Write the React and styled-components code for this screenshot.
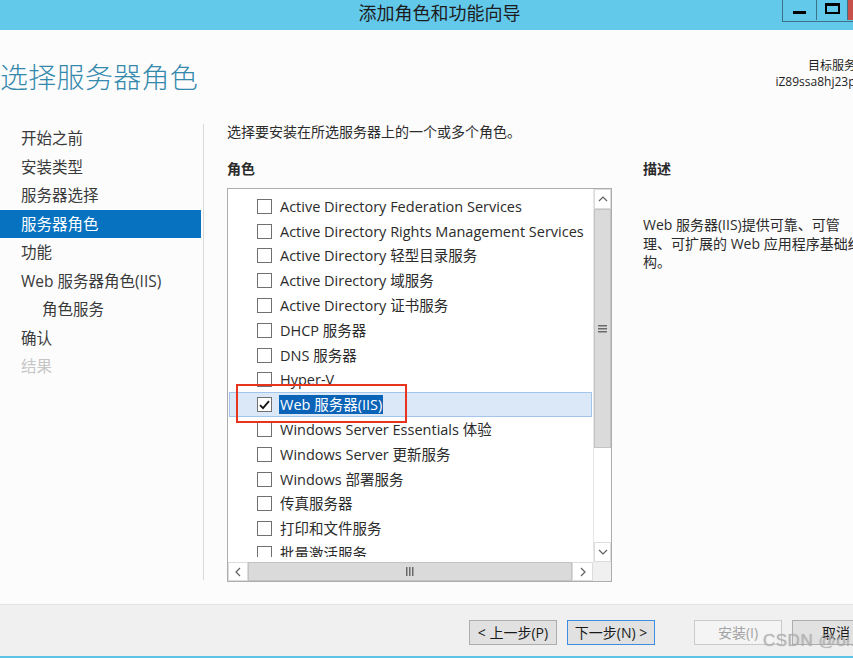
import React from "react";
import styled, { createGlobalStyle } from "styled-components";

const UI_FONT = `"Open Sans", "Noto Sans CJK SC", sans-serif`;

const GlobalStyle = createGlobalStyle`
  html, body {
    margin: 0;
    padding: 0;
    background: #fcfcfc;
  }
  body {
    font-family: ${UI_FONT};
  }
`;

const Window = styled.div`
  position: relative;
  width: 853px;
  height: 658px;
  overflow: hidden;
  display: flex;
  flex-direction: column;
  background: #fcfcfc;
  color: #2b2b2b;
  font-family: ${UI_FONT};
`;

/* ---------- title bar ---------- */
const TitleBar = styled.div`
  flex-shrink: 0;
  height: 30px;
  box-sizing: border-box;
  padding-left: 26px;
  display: grid;
  grid-template-columns: 1fr auto 1fr;
  align-items: start;
  background: #63c9ea;
`;

const TitleText = styled.div`
  grid-column: 2;
  font-size: 18px;
  line-height: 27px;
  color: #1c1c1c;
  white-space: nowrap;
`;

const Controls = styled.div`
  grid-column: 3;
  justify-self: end;
  margin-right: -41px;
  display: flex;
  height: 21px;
  border-left: 1px solid #3c7285;
  border-bottom: 1px solid #3c7285;
`;

const CtrlButton = styled.div`
  width: ${(p) => p.$w}px;
  height: 20px;
  box-sizing: border-box;
  border-right: 1px solid #3c7285;
  background: ${(p) => (p.$close ? "#c8504b" : "transparent")};
  display: flex;
  align-items: ${(p) => (p.$min ? "flex-end" : "flex-start")};
  justify-content: center;
`;

const MinGlyph = styled.span`
  width: 13px;
  height: 3px;
  margin-bottom: 6px;
  background: #000;
`;

const MaxGlyph = styled.span`
  width: 15px;
  height: 11px;
  margin-top: 3px;
  box-sizing: border-box;
  border: 2px solid #000;
  border-top-width: 3px;
`;

/* ---------- page header ---------- */
const Header = styled.div`
  flex-shrink: 0;
  height: 94px;
  box-sizing: border-box;
  padding-top: 28px;
  display: flex;
  justify-content: space-between;
  align-items: flex-start;
`;

const PageTitle = styled.h1`
  margin: 0;
  font-family: "Noto Sans CJK SC", sans-serif;
  font-weight: 300;
  font-size: 28px;
  line-height: 36px;
  color: #3489ad;
  letter-spacing: 0.3px;
`;

const TargetInfo = styled.div`
  margin-right: -15px;
  text-align: right;
  font-size: 12px;
  line-height: 16px;
  color: #1e1e1e;
  white-space: nowrap;
`;

/* ---------- body ---------- */
const Body = styled.div`
  flex-shrink: 0;
  height: 480px;
  display: flex;
`;

const Nav = styled.nav`
  flex-shrink: 0;
  width: 204px;
  height: 456px;
  box-sizing: border-box;
  padding-right: 2px;
  border-right: 1px solid #dadada;
`;

const NavItem = styled.div`
  height: 28.5px;
  line-height: 28.5px;
  padding-left: ${(p) => (p.$sub ? 42 : 21)}px;
  font-size: 15.5px;
  white-space: nowrap;
  background: ${(p) => (p.$active ? "#0672c0" : "transparent")};
  color: ${(p) => (p.$active ? "#ffffff" : p.$muted ? "#c6c6c6" : "#3a3a3a")};
`;

const Main = styled.main`
  flex: 1;
  min-width: 0;
  padding-left: 23px;
  display: flex;
  flex-direction: column;
`;

const Intro = styled.p`
  margin: 0;
  font-size: 14px;
  line-height: 16px;
  color: #2b2b2b;
  white-space: nowrap;
`;

const Columns = styled.div`
  margin-top: 21px;
  display: flex;
`;

const RolesColumn = styled.div`
  flex-shrink: 0;
  width: 385px;
`;

const SectionLabel = styled.div`
  font-size: 14px;
  line-height: 16px;
  font-weight: 600;
  color: #2b2b2b;
`;

/* ---------- role list ---------- */
const ListBox = styled.div`
  position: relative;
  margin-top: 11px;
  width: 385px;
  height: 394px;
  box-sizing: border-box;
  border: 1px solid #adadad;
  background: #fff;
  display: grid;
  grid-template-columns: 1fr 18px;
  grid-template-rows: 1fr 19px;
`;

const ListViewport = styled.div`
  padding-top: 5px;
`;

const ListClip = styled.div`
  height: 363px;
  overflow: hidden;
`;

const Row = styled.div`
  height: 24.8px;
  margin: 0 1px;
  box-sizing: border-box;
  padding-left: 27px;
  display: flex;
  align-items: center;
  gap: 8px;
  font-size: 14.5px;
  white-space: nowrap;
  color: #2b2b2b;
  background: ${(p) => (p.$selected ? "#dbe8f8" : "transparent")};
  border: 1px solid ${(p) => (p.$selected ? "#a3c5ec" : "transparent")};
`;

const Check = styled.span`
  flex-shrink: 0;
  width: 15px;
  height: 15px;
  box-sizing: border-box;
  border: 1px solid #707070;
  background: #fff;
  display: flex;
  align-items: center;
  justify-content: center;
`;

const Label = styled.span`
  line-height: 19px;
  padding: 0 1px;
  margin-left: -1px;
  background: ${(p) => (p.$highlight ? "#0b63b8" : "transparent")};
  color: ${(p) => (p.$highlight ? "#ffffff" : "inherit")};
`;

const VScroll = styled.div`
  grid-row: 1;
  grid-column: 2;
  display: flex;
  flex-direction: column;
  background: #fff;
  border-left: 1px solid #e6e6e6;
`;

const HScroll = styled.div`
  grid-row: 2;
  grid-column: 1;
  display: flex;
  background: #fff;
`;

const Corner = styled.div`
  grid-row: 2;
  grid-column: 2;
  background: #f0f0f0;
`;

const ArrowButton = styled.div`
  flex-shrink: 0;
  width: ${(p) => p.$w || 17}px;
  height: ${(p) => p.$h || 19}px;
  box-sizing: border-box;
  border: 1px solid #dcdcdc;
  background: #fff;
  display: flex;
  align-items: center;
  justify-content: center;
`;

const Thumb = styled.div`
  box-sizing: border-box;
  background: #dadada;
  border: 1px solid #c3c3c3;
  display: flex;
  align-items: center;
  justify-content: center;
  flex: ${(p) => (p.$grow ? 1 : "none")};
  height: ${(p) => (p.$h ? `${p.$h}px` : "auto")};
`;

const Track = styled.div`
  flex: 1;
`;

const Annotation = styled.div`
  position: absolute;
  left: 8px;
  top: 195px;
  width: 171px;
  height: 39px;
  box-sizing: border-box;
  border: 2px solid #e8331f;
  pointer-events: none;
`;

/* ---------- description ---------- */
const DescColumn = styled.div`
  margin-left: 31px;
  flex-shrink: 0;
`;

const DescText = styled.div`
  margin-top: 39px;
  font-size: 14px;
  line-height: 18.5px;
  color: #2b2b2b;
  white-space: nowrap;
`;

const DescLine = styled.div``;

/* ---------- footer ---------- */
const Footer = styled.footer`
  flex-shrink: 0;
  height: 52px;
  box-sizing: border-box;
  border-top: 1px solid #e4e4e4;
  background: #f0f0f0;
  padding: 15px 0 0 469px;
  display: flex;
  align-items: flex-start;
`;

const WizardButton = styled.div`
  flex-shrink: 0;
  width: 88px;
  height: 25px;
  box-sizing: border-box;
  margin-left: ${(p) => p.$gap || 0}px;
  border: 1px solid ${(p) => (p.$focus ? "#3d8ee2" : p.$disabled ? "#cacaca" : "#adadad")};
  background: ${(p) => (p.$disabled ? "#f4f4f4" : "#e1e1e1")};
  color: ${(p) => (p.$disabled ? "#a3a3a3" : "#1a1a1a")};
  font-size: 14px;
  line-height: 23px;
  text-align: center;
  white-space: nowrap;
`;

const BottomEdge = styled.div`
  flex-shrink: 0;
  height: 2px;
  background: #5cc3e6;
`;

const Watermark = styled.div`
  position: absolute;
  left: 763px;
  top: 631px;
  font-family: "Liberation Sans", sans-serif;
  font-size: 17px;
  letter-spacing: 0.5px;
  color: rgba(185, 185, 185, 0.75);
  text-shadow: 0 0 1px rgba(120, 120, 120, 0.6);
  white-space: nowrap;
  pointer-events: none;
`;

/* ---------- small drawings ---------- */
const Chevron = ({ dir }) => {
  const paths = {
    up: "M1 5 L5 1 L9 5",
    down: "M1 1 L5 5 L9 1",
    left: "M5 1 L1 5 L5 9",
    right: "M1 1 L5 5 L1 9",
  };
  const vertical = dir === "up" || dir === "down";
  return (
    <svg
      width={vertical ? 10 : 6}
      height={vertical ? 6 : 10}
      viewBox={vertical ? "0 0 10 6" : "0 0 6 10"}
    >
      <path d={paths[dir]} fill="none" stroke="#606060" strokeWidth="1.2" />
    </svg>
  );
};

const Grip = ({ vertical }) =>
  vertical ? (
    <svg width="9" height="8" viewBox="0 0 9 8">
      <rect x="0" y="0" width="9" height="1.5" fill="#6a6a6a" />
      <rect x="0" y="3" width="9" height="1.5" fill="#6a6a6a" />
      <rect x="0" y="6" width="9" height="1.5" fill="#6a6a6a" />
    </svg>
  ) : (
    <svg width="8" height="9" viewBox="0 0 8 9">
      <rect x="0" y="0" width="1.5" height="9" fill="#6a6a6a" />
      <rect x="3" y="0" width="1.5" height="9" fill="#6a6a6a" />
      <rect x="6" y="0" width="1.5" height="9" fill="#6a6a6a" />
    </svg>
  );

const CheckMark = () => (
  <svg width="11" height="10" viewBox="0 0 11 10">
    <path d="M1 5.2 L4 8.2 L10 1.2" fill="none" stroke="#111" strokeWidth="1.8" />
  </svg>
);

const steps = [
  { label: "开始之前" },
  { label: "安装类型" },
  { label: "服务器选择" },
  { label: "服务器角色", active: true },
  { label: "功能" },
  { label: "Web 服务器角色(IIS)" },
  { label: "角色服务", sub: true },
  { label: "确认" },
  { label: "结果", muted: true },
];

const roles = [
  "Active Directory Federation Services",
  "Active Directory Rights Management Services",
  "Active Directory 轻型目录服务",
  "Active Directory 域服务",
  "Active Directory 证书服务",
  "DHCP 服务器",
  "DNS 服务器",
  "Hyper-V",
  "Web 服务器(IIS)",
  "Windows Server Essentials 体验",
  "Windows Server 更新服务",
  "Windows 部署服务",
  "传真服务器",
  "打印和文件服务",
  "批量激活服务",
];

const SELECTED = "Web 服务器(IIS)";

export default function App() {
  return (
    <>
      <GlobalStyle />
      <Window>
        <TitleBar>
          <TitleText>添加角色和功能向导</TitleText>
          <Controls>
            <CtrlButton $w={34} $min>
              <MinGlyph />
            </CtrlButton>
            <CtrlButton $w={31}>
              <MaxGlyph />
            </CtrlButton>
            <CtrlButton $w={46} $close />
          </Controls>
        </TitleBar>

        <Header>
          <PageTitle>选择服务器角色</PageTitle>
          <TargetInfo>
            <div>目标服务器</div>
            <div>iZ89ssa8hj23pzZ</div>
          </TargetInfo>
        </Header>

        <Body>
          <Nav>
            {steps.map((s) => (
              <NavItem key={s.label} $active={s.active} $sub={s.sub} $muted={s.muted}>
                {s.label}
              </NavItem>
            ))}
          </Nav>

          <Main>
            <Intro>选择要安装在所选服务器上的一个或多个角色。</Intro>
            <Columns>
              <RolesColumn>
                <SectionLabel>角色</SectionLabel>
                <ListBox>
                  <ListViewport>
                    <ListClip>
                      {roles.map((r) => {
                        const sel = r === SELECTED;
                        return (
                          <Row key={r} $selected={sel}>
                            <Check>{sel && <CheckMark />}</Check>
                            <Label $highlight={sel}>{r}</Label>
                          </Row>
                        );
                      })}
                    </ListClip>
                  </ListViewport>
                  <VScroll>
                    <ArrowButton $w={17} $h={20}>
                      <Chevron dir="up" />
                    </ArrowButton>
                    <Thumb $h={239}>
                      <Grip vertical />
                    </Thumb>
                    <Track />
                    <ArrowButton $w={17} $h={20}>
                      <Chevron dir="down" />
                    </ArrowButton>
                  </VScroll>
                  <HScroll>
                    <ArrowButton $w={20} $h={19}>
                      <Chevron dir="left" />
                    </ArrowButton>
                    <Thumb $grow>
                      <Grip />
                    </Thumb>
                    <ArrowButton $w={21} $h={19}>
                      <Chevron dir="right" />
                    </ArrowButton>
                  </HScroll>
                  <Corner />
                  <Annotation />
                </ListBox>
              </RolesColumn>

              <DescColumn>
                <SectionLabel>描述</SectionLabel>
                <DescText>
                  <DescLine>Web 服务器(IIS)提供可靠、可管</DescLine>
                  <DescLine>理、可扩展的 Web 应用程序基础结</DescLine>
                  <DescLine>构。</DescLine>
                </DescText>
              </DescColumn>
            </Columns>
          </Main>
        </Body>

        <Footer>
          <WizardButton>&lt; 上一步(P)</WizardButton>
          <WizardButton $gap={10} $focus>
            下一步(N) &gt;
          </WizardButton>
          <WizardButton $gap={39} $disabled>
            安装(I)
          </WizardButton>
          <WizardButton $gap={10}>取消</WizardButton>
        </Footer>
        <BottomEdge />
        <Watermark>CSDN @oi..</Watermark>
      </Window>
    </>
  );
}
